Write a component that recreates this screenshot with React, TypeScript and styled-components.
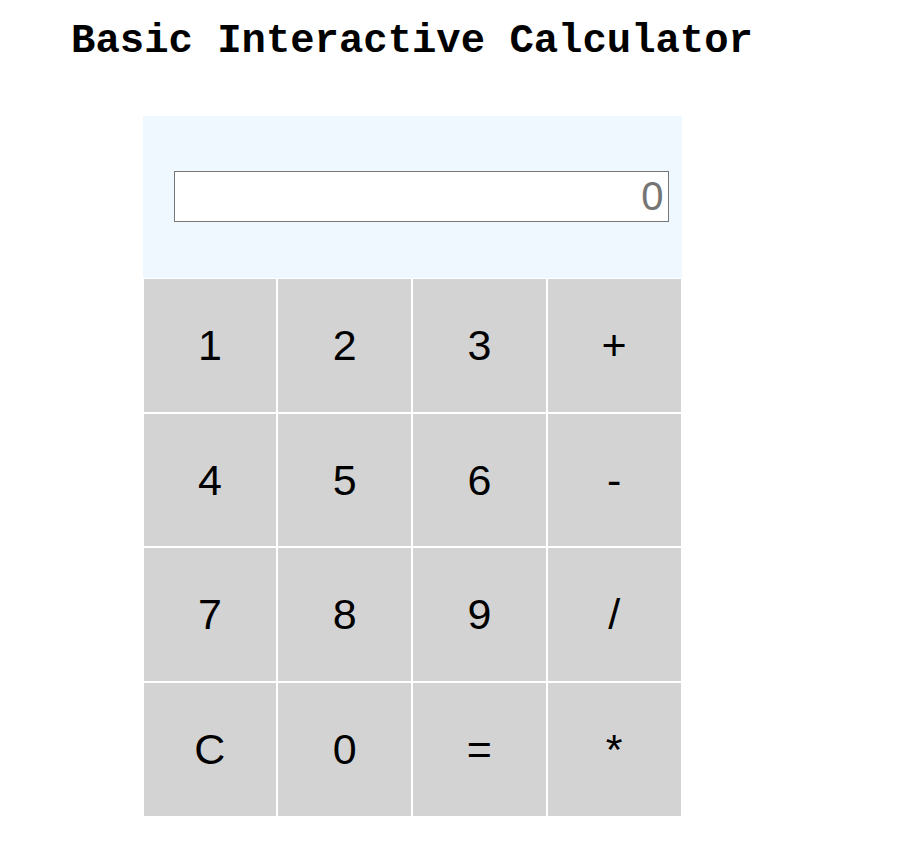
import React, { useState } from "react";
import styled, { createGlobalStyle } from "styled-components";

const GlobalStyle = createGlobalStyle`
  html, body {
    margin: 0;
    padding: 0;
    background: #ffffff;
  }
  body {
    font-family: "Liberation Sans", Arial, sans-serif;
  }
`;

const Page = styled.div`
  width: 808px;
  margin-left: 8px;
  padding-top: 19px;
  padding-bottom: 26px;
  display: flex;
  flex-direction: column;
  align-items: center;
`;

const Title = styled.h1`
  margin: 0;
  font-family: "Liberation Mono", "Courier New", monospace;
  font-weight: bold;
  font-size: 40.6px;
  line-height: 45px;
  color: #000000;
  white-space: pre;
`;

const Calculator = styled.div`
  margin-top: 52px;
  width: 539px;
  display: flex;
  flex-direction: column;
`;

const DisplayPanel = styled.div`
  background: #f0f8ff;
  padding: 55px 13px 56px 31px;
  display: flex;
`;

const Display = styled.input`
  box-sizing: border-box;
  width: 495px;
  height: 51px;
  border: 1px solid #767676;
  padding: 1px 4px;
  font-family: "Liberation Sans", Arial, sans-serif;
  font-size: 40px;
  text-align: right;
  color: #000000;
  background: #ffffff;
  outline: none;
  &::placeholder {
    color: #757575;
  }
`;

const Keypad = styled.div`
  display: grid;
  grid-template-columns: repeat(4, 134.75px);
  grid-auto-rows: 134.7px;
`;

const Key = styled.button`
  box-sizing: border-box;
  margin: 0;
  border: 1px solid #ffffff;
  background: #d3d3d3;
  font-family: "Liberation Sans", Arial, sans-serif;
  font-size: 43px;
  color: #000000;
  display: flex;
  align-items: center;
  justify-content: center;
  padding: 0;
  cursor: pointer;
`;

const keys = ["1", "2", "3", "+", "4", "5", "6", "-", "7", "8", "9", "/", "C", "0", "=", "*"];

export default function App() {
  const [value, setValue] = useState("");

  const press = (k: string) => {
    if (k === "C") {
      setValue("");
      return;
    }
    if (k === "=") {
      try {
        if (!/^[0-9+\-*/. ]+$/.test(value)) return;
        // eslint-disable-next-line no-new-func
        const r = Function(`"use strict";return (${value})`)();
        setValue(String(r));
      } catch {
        setValue("Error");
      }
      return;
    }
    setValue((v) => v + k);
  };

  return (
    <>
      <GlobalStyle />
      <Page>
        <Title>Basic Interactive Calculator</Title>
        <Calculator>
          <DisplayPanel>
            <Display placeholder="0" value={value} readOnly />
          </DisplayPanel>
          <Keypad>
            {keys.map((k) => (
              <Key key={k} onClick={() => press(k)}>
                {k}
              </Key>
            ))}
          </Keypad>
        </Calculator>
      </Page>
    </>
  );
}
